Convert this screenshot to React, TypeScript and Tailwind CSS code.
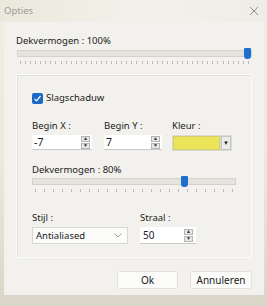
import React from "react";

const font = { fontFamily: '"Noto Sans", "Liberation Sans", sans-serif' };

function Ticks({ count }: { count: number }) {
  return (
    <div className="flex justify-between px-[3px]">
      {Array.from({ length: count }).map((_, i) => (
        <div key={i} className="w-px h-[3px] bg-[#b9b8b2]" />
      ))}
    </div>
  );
}

function Slider({ value, ticks }: { value: number; ticks: number }) {
  return (
    <div className="flex flex-col gap-[4px]">
      <div className="relative h-[7px] bg-[#e4e3de] border border-[#d3d2cc]">
        <div
          className="absolute top-[-3px] w-[7px] h-[11px] bg-[#1f6fcf] rounded-b-[3px] rounded-t-[1px]"
          style={{ left: `calc(${value}% - ${value * 0.07}px)` }}
        />
      </div>
      <Ticks count={ticks} />
    </div>
  );
}

function Spin() {
  return (
    <div className="flex flex-col gap-px">
      <div className="w-[9px] h-[6px] bg-[#e8e8e8] border border-[#b5b5b5] flex items-center justify-center text-[5px] leading-none text-[#333]">▲</div>
      <div className="w-[9px] h-[6px] bg-[#e8e8e8] border border-[#b5b5b5] flex items-center justify-center text-[5px] leading-none text-[#333]">▼</div>
    </div>
  );
}

function NumInput({ value, w }: { value: string; w: string }) {
  return (
    <div className={`${w} h-[15px] bg-white flex items-center justify-between pl-[2px] pr-[2px] border-b border-[#c9c9c9]`}>
      <span className="text-[10.5px] leading-none text-[#1a1a1a]">{value}</span>
      <Spin />
    </div>
  );
}

export default function App() {
  return (
    <div
      className="w-[267px] h-[306px] flex flex-col bg-gradient-to-b from-[#efeee4] via-[#eceae0] to-[#d9d6c8] overflow-hidden"
      style={font}
    >
      <div className="h-[22px] flex items-center justify-between pl-[4px] pr-[8px] bg-gradient-to-r from-[#ebe9dc] via-[#f2f1ea] to-[#eeede6]">
        <span className="text-[9.5px] text-[#9a9a96]">Opties</span>
        <svg width="10" height="10" viewBox="0 0 10 10">
          <path d="M1 1L9 9M9 1L1 9" stroke="#8f8f8c" strokeWidth="1" />
        </svg>
      </div>
      <div className="flex-1 flex px-[4px] pb-[11px]">
        <div className="flex-1 bg-[#f2f1ed] flex flex-col px-[12px] pt-[12px] text-[#1a1a1a]">
          <div className="text-[9.5px] leading-[14px]">Dekvermogen : 100%</div>
          <div className="mt-[2px] ml-[1px]">
            <Slider value={100} ticks={46} />
          </div>
          <div className="mt-[10px] h-[184px] border border-[#fcfcfb] shadow-[inset_1px_1px_0_#e1e0db] flex flex-col px-[15px] pt-[16px]">
            <div className="flex items-center gap-[3px]">
              <div className="w-[11px] h-[11px] bg-[#1c68c5] rounded-[2px] flex items-center justify-center">
                <svg width="9" height="9" viewBox="0 0 9 9">
                  <path d="M1.5 4.8L3.5 6.8L7.5 2" stroke="white" strokeWidth="1.2" fill="none" />
                </svg>
              </div>
              <span className="text-[9.5px] leading-[14px]">Slagschaduw</span>
            </div>
            <div className="mt-[14px] flex">
              <div className="w-[72px] flex flex-col gap-[2px]">
                <span className="text-[9.5px] leading-[14px]">Begin X :</span>
                <NumInput value="-7" w="w-[60px]" />
              </div>
              <div className="w-[68px] flex flex-col gap-[2px]">
                <span className="text-[9.5px] leading-[14px]">Begin Y :</span>
                <NumInput value="7" w="w-[58px]" />
              </div>
              <div className="flex flex-col gap-[2px]">
                <span className="text-[9.5px] leading-[14px]">Kleur :</span>
                <div className="flex items-center gap-[1px] bg-[#dcdbd3] p-[1px]">
                  <div className="w-[47px] h-[14px] bg-[#ece55a] border border-[#d3cf6d]" />
                  <div className="w-[10px] h-[14px] bg-[#ebebeb] border border-[#c4c4c4] flex items-center justify-center text-[6px] leading-none">▼</div>
                </div>
              </div>
            </div>
            <div className="mt-[12px] text-[9.5px] leading-[14px]">Dekvermogen : 80%</div>
            <div className="mt-[1px] w-[204px]">
              <Slider value={76} ticks={23} />
            </div>
            <div className="mt-[19px] flex">
              <div className="w-[108px] flex flex-col gap-[2px]">
                <span className="text-[9.5px] leading-[14px]">Stijl :</span>
                <div className="w-[96px] h-[17px] bg-[#fbfbfa] border border-[#d8d7d2] flex items-center justify-between pl-[3px] pr-[5px]">
                  <span className="text-[9.5px] leading-none">Antialiased</span>
                  <svg width="8" height="5" viewBox="0 0 8 5">
                    <path d="M0.5 0.5L4 4L7.5 0.5" stroke="#9a9a9a" fill="none" />
                  </svg>
                </div>
              </div>
              <div className="flex flex-col gap-[2px]">
                <span className="text-[9.5px] leading-[14px]">Straal :</span>
                <div className="w-[56px] h-[17px] bg-white flex items-center justify-between pl-[3px] pr-[3px] border-b border-[#c9c9c9]">
                  <span className="text-[10px] leading-none">50</span>
                  <Spin />
                </div>
              </div>
            </div>
          </div>
          <div className="mt-[13px] flex justify-end gap-[12px]">
            <button className="w-[61px] h-[18px] bg-[#fbfbfa] border border-[#e2e1dc] rounded-[3px] text-[10px] leading-none">Ok</button>
            <button className="w-[62px] h-[18px] bg-[#fbfbfa] border border-[#e2e1dc] rounded-[3px] text-[10px] leading-none">Annuleren</button>
          </div>
        </div>
      </div>
    </div>
  );
}
